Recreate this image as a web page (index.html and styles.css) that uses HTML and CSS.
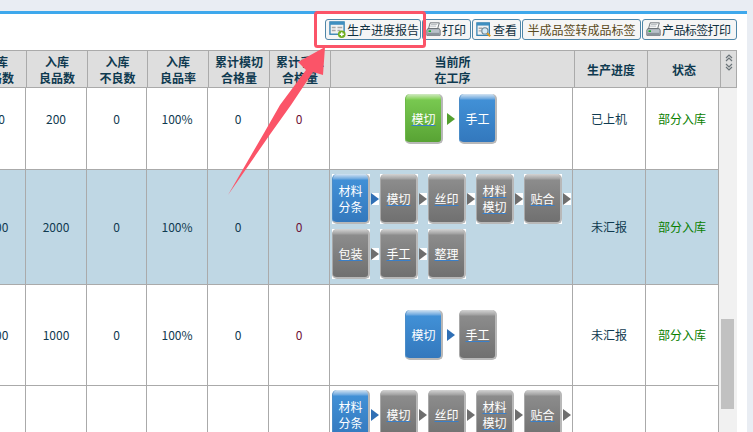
FILE: index.html
```html
<!DOCTYPE html>
<html lang="zh-CN">
<head>
<meta charset="UTF-8">
<meta name="viewport" content="width=device-width, initial-scale=1.0">
<title>生产进度</title>
<link rel="stylesheet" href="styles.css">
</head>
<body>

<div class="panel">
    <div class="toolbar">
        <button class="btn btn-report">
            <svg class="icon" viewBox="0 0 18 18"><rect x="1" y="1" width="15" height="13" fill="#f2f2f2" stroke="#2f7fb0" stroke-width="1.4"/><rect x="1" y="1" width="15" height="3" fill="#3f8fc0"/><path d="M3 7h4M3 10h4M9 7h5M9 10h3" stroke="#a8a8a8" stroke-width="1.6"/><circle cx="13.5" cy="14" r="4" fill="#6fae1e"/><path d="M11.3 14h4.4M13.5 11.8v4.4" stroke="#fff" stroke-width="1.5"/></svg>
            生产进度报告
        </button>
        <button class="btn btn-print">
            <svg class="icon icon-printer" viewBox="0 0 18 18"><path d="M5 1h11l-2 7H3z" fill="#f6f6f6" stroke="#5a6066"/><path d="M6 3h7M5 5h7" stroke="#b0b6bb"/><path d="M2 8h14l1 2v6H1v-6z" fill="#b9c2ca" stroke="#5c6268"/><rect x="2" y="13" width="14" height="3" fill="#8a939b"/><rect x="3" y="10" width="3" height="2" fill="#18b030"/></svg>
            打印
        </button>
        <button class="btn btn-view">
            <svg class="icon icon-window" viewBox="0 0 18 18"><rect x="1" y="1" width="14" height="14" fill="#f2f2f2" stroke="#2f7fb0" stroke-width="1.4"/><rect x="1" y="1" width="14" height="3" fill="#3f8fc0"/><path d="M3 7h4M3 10h3" stroke="#a8a8a8" stroke-width="1.6"/><circle cx="10" cy="10" r="3.5" fill="#d5ebf7" stroke="#6b8494" stroke-width="1.3"/><path d="M12.6 12.6l3.4 3.4" stroke="#e09a20" stroke-width="2.4"/></svg>
            查看
        </button>
        <button class="btn btn-convert">半成品签转成品标签</button>
        <button class="btn btn-label">
            <svg class="icon icon-printer" viewBox="0 0 18 18"><path d="M5 1h11l-2 7H3z" fill="#f6f6f6" stroke="#5a6066"/><path d="M6 3h7M5 5h7" stroke="#b0b6bb"/><path d="M2 8h14l1 2v6H1v-6z" fill="#b9c2ca" stroke="#5c6268"/><rect x="2" y="13" width="14" height="3" fill="#8a939b"/><rect x="3" y="10" width="3" height="2" fill="#18b030"/></svg>
            产品标签打印
        </button>
    </div>

    <table class="head-table">
        <colgroup>
            <col class="h-a"><col class="h-a"><col class="h-b"><col class="h-a"><col class="h-a"><col class="h-a">
            <col class="h-flow"><col class="h-c"><col class="h-c"><col class="h-end">
        </colgroup>
        <tr>
            <th>入库<br>合格数</th>
            <th>入库<br>良品数</th>
            <th>入库<br>不良数</th>
            <th>入库<br>良品率</th>
            <th>累计模切<br>合格量</th>
            <th>累计手工<br>合格量</th>
            <th>当前所<br>在工序</th>
            <th>生产进度</th>
            <th>状态</th>
            <th class="sort-cell">
                <svg class="sort-icon" viewBox="0 0 8 17"><path d="M1 4l3-3 3 3M1 7l3-3 3 3M1 10l3 3 3-3M1 13l3 3 3-3" fill="none" stroke="#6a7378" stroke-width="1.2"/></svg>
            </th>
        </tr>
    </table>

    <div class="body-wrap">
        <div class="body-scroll">
            <table class="body-table">
                <colgroup>
                    <col class="b-a"><col class="b-a"><col class="b-b"><col class="b-a"><col class="b-a"><col class="b-a">
                    <col class="b-flow"><col class="b-c"><col class="b-c">
                </colgroup>
                <tr class="row-short">
                    <td>200</td><td>200</td><td>0</td><td>100%</td><td>0</td><td class="dark-red">0</td>
                    <td class="flow-cell">
                        <div class="flow flow-short">
                            <span class="step"><a class="node green link">模切</a></span>
                            <i class="arrow arrow-green"></i>
                            <span class="step"><a class="node blue">手工</a></span>
                        </div>
                    </td>
                    <td>已上机</td><td class="status">部分入库</td>
                </tr>
                <tr class="row-tall selected">
                    <td>2000</td><td>2000</td><td>0</td><td>100%</td><td>0</td><td class="dark-red">0</td>
                    <td class="flow-cell">
                        <div class="flow">
                            <span class="step"><a class="node blue">材料<br>分条</a></span>
                            <i class="arrow arrow-blue"></i>
                            <span class="step"><a class="node gray link">模切</a></span>
                            <i class="arrow"></i>
                            <span class="step"><a class="node gray link">丝印</a></span>
                            <i class="arrow"></i>
                            <span class="step"><a class="node gray link">材料<br>模切</a></span>
                            <i class="arrow"></i>
                            <span class="step"><a class="node gray link">贴合</a></span>
                            <i class="arrow"></i>
                            <span class="step"><a class="node gray link">包装</a></span>
                            <i class="arrow"></i>
                            <span class="step"><a class="node gray link">手工</a></span>
                            <i class="arrow"></i>
                            <span class="step"><a class="node gray link">整理</a></span>
                        </div>
                    </td>
                    <td>未汇报</td><td class="status">部分入库</td>
                </tr>
                <tr class="row-short">
                    <td>1000</td><td>1000</td><td>0</td><td>100%</td><td>0</td><td class="dark-red">0</td>
                    <td class="flow-cell">
                        <div class="flow flow-short">
                            <span class="step"><a class="node blue">模切</a></span>
                            <i class="arrow arrow-blue"></i>
                            <span class="step"><a class="node gray link">手工</a></span>
                        </div>
                    </td>
                    <td>未汇报</td><td class="status">部分入库</td>
                </tr>
                <tr class="row-tall">
                    <td>2000</td><td>2000</td><td>0</td><td>100%</td><td>0</td><td class="dark-red">0</td>
                    <td class="flow-cell">
                        <div class="flow">
                            <span class="step"><a class="node blue">材料<br>分条</a></span>
                            <i class="arrow arrow-blue"></i>
                            <span class="step"><a class="node gray link">模切</a></span>
                            <i class="arrow"></i>
                            <span class="step"><a class="node gray link">丝印</a></span>
                            <i class="arrow"></i>
                            <span class="step"><a class="node gray link">材料<br>模切</a></span>
                            <i class="arrow"></i>
                            <span class="step"><a class="node gray link">贴合</a></span>
                            <i class="arrow"></i>
                            <span class="step"><a class="node gray link">包装</a></span>
                            <i class="arrow"></i>
                            <span class="step"><a class="node gray link">手工</a></span>
                            <i class="arrow"></i>
                            <span class="step"><a class="node gray link">整理</a></span>
                        </div>
                    </td>
                    <td>未汇报</td><td class="status">部分入库</td>
                </tr>
            </table>
        </div>
        <div class="scrollbar"><div class="thumb"></div></div>
    </div>
</div>

<!-- annotation drawn over the screenshot -->
<svg class="markup" viewBox="0 0 753 432">
    <rect x="315.5" y="12.5" width="109" height="34" rx="2" fill="none" stroke="#fb5468" stroke-width="3"/>
    <path d="M228 195L264 133 280 105 306 70 298 62 325 47 323 75 313 72 291 105 271 133z" fill="#fb5468"/>
</svg>

</body>
</html>
```

FILE: styles.css
```css
html, body {
    margin: 0;
    height: 432px;
    overflow: hidden;
    background-color: #e9edf3;
}
body {
    position: relative;
    padding-top: 11px;
    box-sizing: border-box;
    font-family: "Noto Sans CJK SC", sans-serif;
    font-size: 12px;
    color: #0f3a50;
}
.panel {
    width: 747px;
    height: 421px;
    box-sizing: border-box;
    border-top: 3px solid #3ea8ec;
    padding-right: 10px;
    background-color: #fff;
    overflow: hidden;
}

/* toolbar */
.toolbar {
    display: flex;
    justify-content: flex-end;
    height: 36px;
    padding-top: 5px;
    box-sizing: border-box;
}
.btn {
    display: flex;
    align-items: center;
    height: 21px;
    margin-left: 1px;
    padding: 0 0 0 3px;
    border: 1px solid #4f86a8;
    border-radius: 3px;
    background-color: #f5f5f5;
    font-family: inherit;
    font-size: 12px;
    color: #10303f;
    white-space: nowrap;
}
.icon {
    width: 17px;
    height: 17px;
    flex: none;
    margin-right: 1px;
}
.icon-printer {
    width: 15px;
    height: 15px;
}
.icon-window {
    width: 16px;
    height: 16px;
}
.btn-report { width: 96px; margin-left: 0; }
.btn-print { width: 49px; }
.btn-view { width: 49px; }
.btn-convert {
    width: 119px;
    padding: 0;
    justify-content: center;
    color: #5a4a20;
}
.btn-label { width: 95px; letter-spacing: -0.6px; }

/* tables */
table {
    table-layout: fixed;
    border-collapse: separate;
    border-spacing: 0;
}
.head-table {
    width: 771px;
    margin-left: -34px;
    border-top: 1px solid #aaa;
}
.head-table th {
    height: 34px;
    padding: 2px 0 0;
    border-right: 1px solid #aaa;
    border-bottom: 1px solid #aaa;
    background-color: #dedede;
    font-size: 12px;
    font-weight: bold;
    line-height: 16px;
    color: #0f3a50;
    text-align: center;
    overflow: hidden;
    white-space: nowrap;
}
.h-a { width: 61px; }
.h-b { width: 60px; }
.h-flow { width: 244px; }
.h-c { width: 73px; }
.h-end { width: 16px; }
.head-table .sort-cell {
    height: 36px;
    padding: 0;
    vertical-align: top;
}
.sort-icon {
    display: block;
    width: 8px;
    height: 17px;
    margin: 3px 0 0 4px;
}

.body-wrap {
    display: flex;
    height: 344px;
}
.body-scroll {
    width: 719px;
    overflow: hidden;
}
.body-table {
    width: 754px;
    margin: -19px 0 0 -35px;
}
.body-table td {
    padding: 0 0 2px;
    border-right: 1px solid #aaa;
    border-bottom: 1px solid #aaa;
    text-align: center;
    vertical-align: middle;
}
.b-a { width: 61px; }
.b-b { width: 60px; }
.b-flow { width: 243px; }
.b-c { width: 73px; }
.row-short td { height: 98px; }
.row-tall td { height: 112px; }
.body-table .flow-cell { padding: 0; }
.row-short .flow-cell { height: 100px; }
.row-tall .flow-cell {
    height: 114px;
    padding-top: 4px;
    box-sizing: border-box;
    vertical-align: top;
}
.selected td { background-color: #bfd7e4; }
.dark-red { color: #6e1038; }
.status { color: #0a8000; }

/* process flow */
.flow {
    display: flex;
    flex-wrap: wrap;
    align-items: center;
    gap: 5px 0;
    padding-left: 2px;
}
.flow-short {
    justify-content: center;
    padding-left: 0;
}
.step {
    display: block;
    width: 38px;
    height: 50px;
    background-color: #fff;
}
.node {
    display: flex;
    align-items: center;
    justify-content: center;
    width: 38px;
    height: 50px;
    box-sizing: border-box;
    padding-top: 2px;
    border-left: 1px solid #a8a8a8;
    border-right: 2px solid #b8b8b8;
    border-bottom: 2px solid #b8b8b8;
    border-radius: 5px;
    font-size: 12px;
    line-height: 16px;
    color: #fff;
}
.link {
    text-decoration: underline;
    text-decoration-color: #3a7fc8;
}
.blue {
    border-left-color: #4a8cc8;
    background: linear-gradient(#d4e4f2 0, #6aa6de 5px, #4190d6 6px, #3378bd 100%);
}
.gray {
    background: linear-gradient(#d4d4d4 0, #a0a0a0 5px, #8c8c8c 6px, #707070 100%);
}
.green {
    border-left-color: #6cb848;
    background: linear-gradient(#d2eac4 0, #8ad35e 5px, #78c850 6px, #58a334 100%);
}
.arrow {
    display: block;
    width: 0;
    height: 0;
    margin: 0 1px;
    border-left: 8px solid #6e6e6e;
    border-top: 6px solid transparent;
    border-bottom: 6px solid transparent;
    background-color: #fff;
}
.flow-short .arrow { margin: 0 4px; }
.arrow-blue { border-left-color: #2f6fb5; }
.arrow-green { border-left-color: #55a030; }

.scrollbar {
    width: 18px;
    background-color: #f1f1f1;
}
.thumb {
    width: 13px;
    height: 90px;
    margin: 231px 0 0 2px;
    background-color: #c1c1c1;
}

/* red box and arrow over the page */
.markup {
    position: absolute;
    top: 0;
    left: 0;
    width: 753px;
    height: 432px;
    pointer-events: none;
}
```
